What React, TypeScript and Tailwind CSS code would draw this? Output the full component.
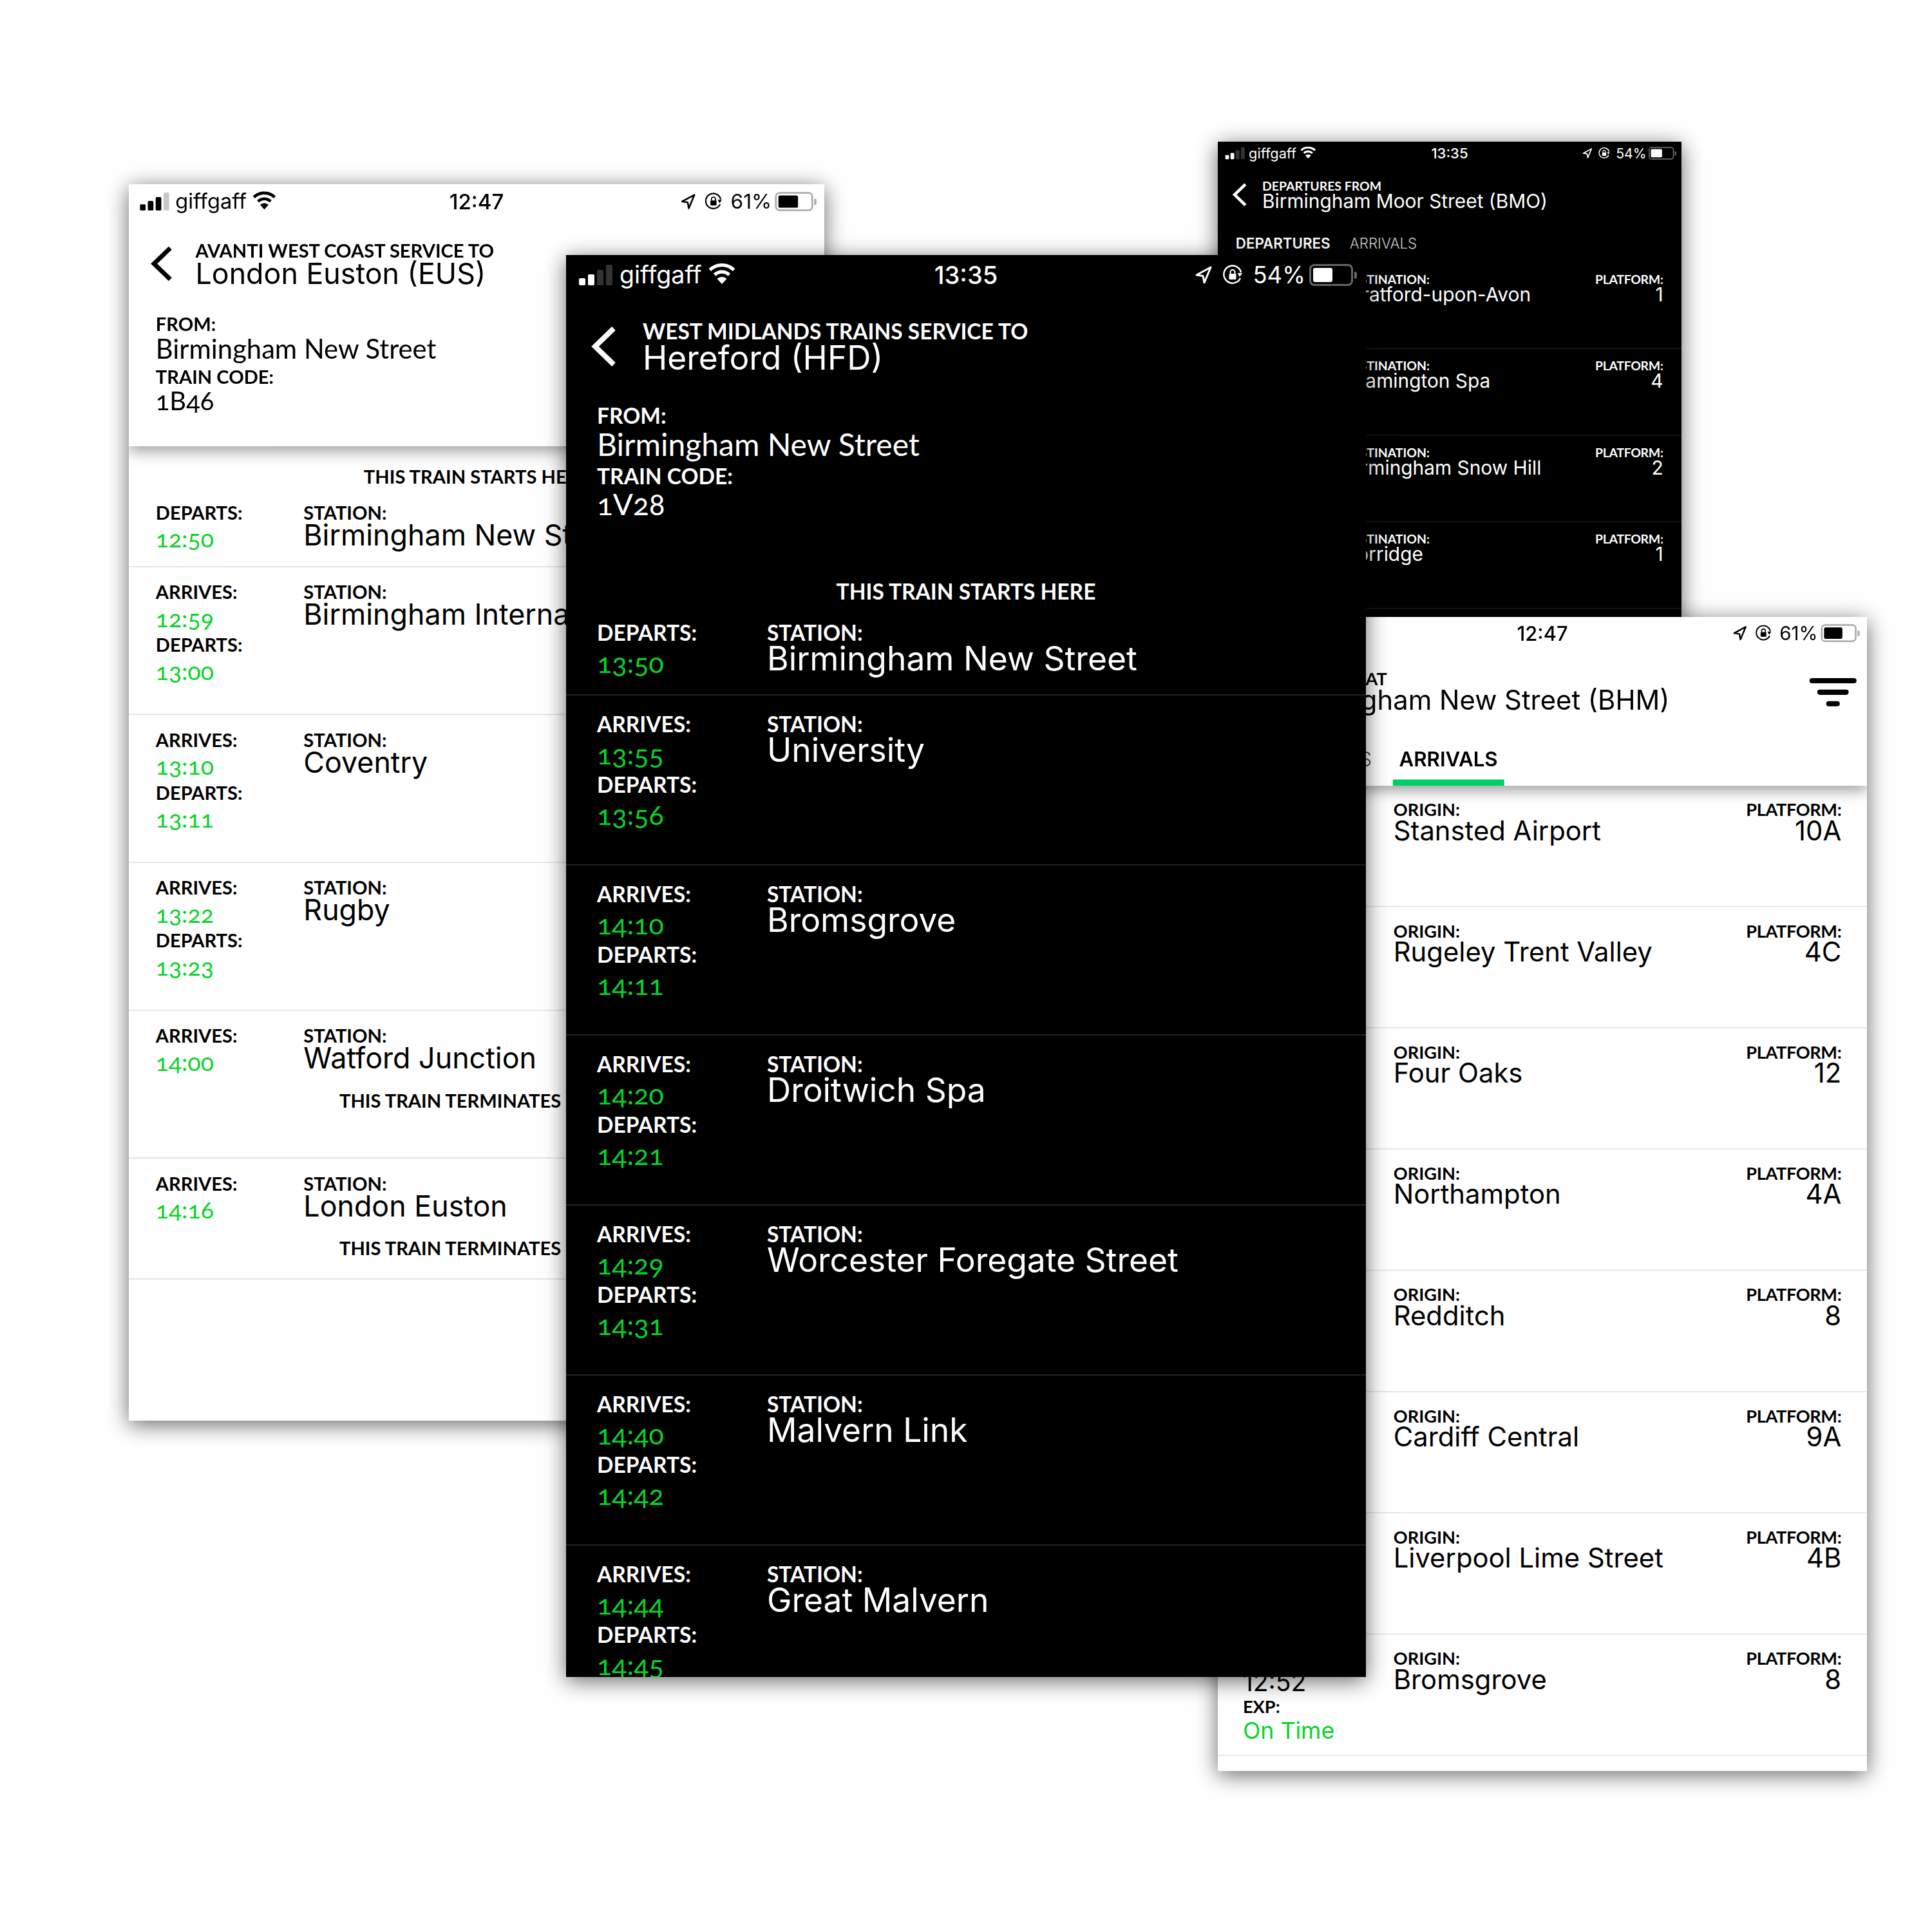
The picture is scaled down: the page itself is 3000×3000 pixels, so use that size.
import React from "react";

const inter = "[font-family:Inter,sans-serif]";
const labelBase = "[font-family:Lato,sans-serif] font-bold text-[33.500px] whitespace-nowrap";
const label = `${labelBase} leading-[34px]`;
const raleway = "[font-family:Lato,sans-serif] font-normal oldstyle-nums whitespace-nowrap";

function BackChevron() {
  return (
    <svg viewBox="0 0 40 62" className="w-[40px] h-[62px]" fill="none" stroke="currentColor" strokeWidth="8">
      <path d="M36 3 L7 31 L36 59" />
    </svg>
  );
}

function Wifi() {
  return (
    <svg viewBox="0 0 42 32" className="w-[42px] h-[32px]" fill="currentColor">
      <path d="M21 0C13 0 5.800 3.100 .6 8.300l3.600 3.900C8.500 7.900 14.400 5.300 21 5.300s12.500 2.600 16.800 6.900l3.600-3.900C36.200 3.100 29 0 21 0z" />
      <path d="M21 10.500c-5.100 0-9.700 2-13.100 5.300l3.600 3.900c2.400-2.400 5.800-3.900 9.500-3.900s7.100 1.500 9.500 3.900l3.600-3.900c-3.400-3.300-8-5.300-13.100-5.300z" />
      <path d="M21 21c-2.900 0-5.500 1.200-7.400 3L21 32l7.400-8c-1.900-1.800-4.500-3-7.400-3z" />
    </svg>
  );
}

function LocationArrow() {
  return (
    <svg viewBox="0 0 28 30" className="w-[28px] h-[30px]" fill="none" stroke="currentColor" strokeWidth="3" strokeLinejoin="round">
      <path d="M25 3 L3 15 L13 16.500 L15 27 Z" />
    </svg>
  );
}

function RotationLock() {
  return (
    <svg viewBox="0 0 32 32" className="w-[32px] h-[32px]" fill="none" stroke="currentColor" strokeWidth="2.500">
      <path d="M28 21 A13.500 13.500 0 1 1 29 12" />
      <path d="M31 13 L23.500 13 L27 19 Z" fill="currentColor" stroke="none" />
      <rect x="10.500" y="14" width="11" height="9" rx="1.500" fill="currentColor" stroke="none" />
      <path d="M12.500 14 V11.500 a3.500 3.500 0 0 1 7 0 V14" strokeWidth="2" />
    </svg>
  );
}

function StatusBar({ dark, carrier = "giffgaff", time, percent, bars, level }: { dark: boolean; carrier?: string; time: string; percent: string; bars: number; level: string }) {
  const on = dark ? "bg-white" : "bg-black";
  const off = dark ? "bg-[#333333]" : "bg-[#c8c8c8]";
  return (
    <div className={`grid grid-cols-3 items-center h-[60px] pt-[2px] pl-[20px] pr-[20px] text-[36.500px] ${inter} ${dark ? "text-white" : "text-black"}`}>
      <div className="flex items-center">
        <div className="flex items-end gap-[4px] h-[32px]">
          <div className={`w-[10px] h-[11px] rounded-[2px] ${on}`} />
          <div className={`w-[10px] h-[17px] rounded-[2px] ${on}`} />
          <div className={`w-[10px] h-[24px] rounded-[2px] ${bars > 2 ? on : off}`} />
          <div className={`w-[10px] h-[32px] rounded-[2px] ${bars > 3 ? on : off}`} />
        </div>
        <span className="ml-[11px] text-[37.500px]">{carrier}</span>
        <div className="ml-[10px] -mt-[4px]"><Wifi /></div>
      </div>
      <div className="text-center font-medium text-[38px]">{time}</div>
      <div className="flex items-center justify-end -mr-[6px]">
        <LocationArrow />
        <div className="ml-[15px]"><RotationLock /></div>
        <span className="ml-[15px]">{percent}</span>
        <div className={`ml-[6px] w-[68px] h-[34px] rounded-[8px] border-[3px] p-[3px] ${dark ? "border-[#666666]" : "border-[#a8a8a8]"}`}>
          <div className={`h-full rounded-[3px] ${level} ${on}`} />
        </div>
        <div className={`ml-[2px] w-[4px] h-[11px] rounded-r-[3px] ${dark ? "bg-[#666666]" : "bg-[#a8a8a8]"}`} />
      </div>
    </div>
  );
}

function Title({ over, name }: { over: string; name: string }) {
  return (
    <div className="flex items-start pt-[40px] pl-[38px]">
      <div className="mt-[11px] w-[81px] shrink-0"><BackChevron /></div>
      <div>
        <div className={`${labelBase} leading-[36px]`}>{over}</div>
        <div className={`${inter} text-[51.500px] leading-[47px] whitespace-nowrap`}>{name}</div>
      </div>
    </div>
  );
}

type Stop = { arrives?: string; departs?: string; station: string; ends?: boolean };

function Time({ value }: { value: string }) {
  return <div className={`${raleway} text-[#08d429] text-[43px] leading-[60px]`}>{value}</div>;
}

function StopRow({ stop, dark, height, first }: { stop: Stop; dark: boolean; height: string; first: boolean }) {
  return (
    <div className={`${height} ${first ? "pt-[29px]" : "pt-[27px]"} shrink-0 px-[48px] border-b-[2px] ${dark ? "border-[#222222]" : "border-[#e3e3e3]"}`}>
      <div className="flex">
        <div className="w-[264px] shrink-0">
          <div className={label}>{stop.arrives ? "ARRIVES:" : "DEPARTS:"}</div>
          <Time value={(stop.arrives ?? stop.departs) as string} />
          {stop.arrives && stop.departs && (
            <>
              <div className={label}>DEPARTS:</div>
              <Time value={stop.departs} />
            </>
          )}
        </div>
        <div>
          <div className={label}>STATION:</div>
          <div className={`${inter} text-[51.500px] leading-[46px] whitespace-nowrap`}>{stop.station}</div>
        </div>
      </div>
      {stop.ends && <div className={`${label} mt-[22px] text-center`}>THIS TRAIN TERMINATES HERE</div>}
    </div>
  );
}

function ServiceScreen({ dark, status, operator, to, code, stops, lastHeight }: { dark: boolean; status: React.ReactNode; operator: string; to: string; code: string; stops: Stop[]; lastHeight: string }) {
  return (
    <div className={`flex flex-col h-full ${dark ? "bg-black text-white" : "bg-white text-black"}`}>
      <div className={`relative z-10 h-[468px] shrink-0 ${dark ? "bg-black" : "bg-white shadow-[0_8px_26px_rgba(0,0,0,0.4)]"}`}>
        {status}
        <Title over={`${operator} SERVICE TO`} name={to} />
        <div className="pt-[49px] px-[48px]">
          <div className={label}>FROM:</div>
          <div className={`${raleway} text-[48px] leading-[56px] mb-[4px]`}>Birmingham New Street</div>
          <div className={label}>TRAIN CODE:</div>
          <div className={`${raleway} text-[46px] leading-[54px]`}>{code}</div>
        </div>
      </div>
      <div className={`${label} pt-[37px] h-[72px] shrink-0 text-center`}>THIS TRAIN STARTS HERE</div>
      {stops.map((stop, i) => (
        <StopRow key={stop.station} stop={stop} dark={dark} first={i === 0} height={i === 0 ? "h-[144px]" : i === stops.length - 1 ? lastHeight : "h-[264px]"} />
      ))}
    </div>
  );
}

type Board = { place: string; platform: string; time?: string };

function BoardScreen({ dark, status, over, name, active, column, rows }: { dark: boolean; status: React.ReactNode; over: string; name: string; active: "DEPARTURES" | "ARRIVALS"; column: string; rows: Board[] }) {
  const on = `${dark ? "text-white" : "text-black"} font-semibold`;
  const off = `${dark ? "text-[#cccccc]" : "text-[#444444]"} font-light`;
  return (
    <div className={`flex flex-col h-full ${dark ? "bg-black text-white" : "bg-white text-black"}`}>
      <div className={`relative z-10 flex flex-col h-[323px] shrink-0 ${dark ? "bg-black" : "bg-white shadow-[0_8px_26px_rgba(0,0,0,0.4)]"}`}>
        {status}
        <div className="relative">
          <Title over={over} name={name} />
          {!dark && (
            <div className="absolute right-[20px] top-[57px] w-[90px] flex flex-col items-center gap-[12px]">
              <div className="w-[90px] h-[10px] rounded-full bg-black" />
              <div className="w-[60px] h-[10px] rounded-full bg-black" />
              <div className="w-[26px] h-[10px] rounded-full bg-black" />
            </div>
          )}
        </div>
        <div className={`flex pl-[36px] mt-auto ${inter} text-[38.500px]`}>
          {(["DEPARTURES", "ARRIVALS"] as const).map((tab) => (
            <div key={tab} className={`px-[12px] mr-[28px] h-[72px] border-b-[12px] leading-[42px] whitespace-nowrap ${tab === active ? `${on} border-[#00ce67]` : `${off} border-transparent`}`}>
              {tab}
            </div>
          ))}
        </div>
      </div>
      {rows.map((row) => (
        <div key={row.place} className={`flex h-[232px] shrink-0 pt-[28px] pl-[48px] pr-[49px] border-b-[2px] ${dark ? "border-[#222222]" : "border-[#e3e3e3]"}`}>
          <div className="w-[288px] shrink-0">
            {row.time && (
              <>
                <div className={label}>SCH:</div>
                <div className={`${inter} text-[48px] leading-[58px]`}>{row.time}</div>
                <div className={label}>EXP:</div>
                <div className={`${inter} text-[#08d429] text-[44px] leading-[60px] whitespace-nowrap`}>On Time</div>
              </>
            )}
          </div>
          <div className="flex-1">
            <div className={label}>{column}</div>
            <div className={`${inter} text-[51.500px] leading-[46px] whitespace-nowrap`}>{row.place}</div>
          </div>
          <div className="text-right">
            <div className={`${label} tracking-[-0.5px]`}>PLATFORM:</div>
            <div className={`${inter} text-[51.500px] leading-[46px]`}>{row.platform}</div>
          </div>
        </div>
      ))}
    </div>
  );
}

function Phone({ place, scale, children }: { place: string; scale: string; children: React.ReactNode }) {
  return (
    <div className={`absolute ${place} shadow-[0_6px_32px_rgba(0,0,0,0.6)]`}>
      <div className="w-full h-full overflow-hidden">
        <div className={`w-[1242px] h-[2208px] origin-top-left ${scale}`}>{children}</div>
      </div>
    </div>
  );
}

const avantiStops: Stop[] = [
  { departs: "12:50", station: "Birmingham New Street" },
  { arrives: "12:59", departs: "13:00", station: "Birmingham International" },
  { arrives: "13:10", departs: "13:11", station: "Coventry" },
  { arrives: "13:22", departs: "13:23", station: "Rugby" },
  { arrives: "14:00", station: "Watford Junction", ends: true },
  { arrives: "14:16", station: "London Euston", ends: true },
];

const herefordStops: Stop[] = [
  { departs: "13:50", station: "Birmingham New Street" },
  { arrives: "13:55", departs: "13:56", station: "University" },
  { arrives: "14:10", departs: "14:11", station: "Bromsgrove" },
  { arrives: "14:20", departs: "14:21", station: "Droitwich Spa" },
  { arrives: "14:29", departs: "14:31", station: "Worcester Foregate Street" },
  { arrives: "14:40", departs: "14:42", station: "Malvern Link" },
  { arrives: "14:44", departs: "14:45", station: "Great Malvern" },
];

const moorStreet: Board[] = [
  { place: "Stratford-upon-Avon", platform: "1" },
  { place: "Leamington Spa", platform: "4" },
  { place: "Birmingham Snow Hill", platform: "2" },
  { place: "Dorridge", platform: "1" },
];

const newStreet: Board[] = [
  { place: "Stansted Airport", platform: "10A" },
  { place: "Rugeley Trent Valley", platform: "4C" },
  { place: "Four Oaks", platform: "12" },
  { place: "Northampton", platform: "4A" },
  { place: "Redditch", platform: "8" },
  { place: "Cardiff Central", platform: "9A" },
  { place: "Liverpool Lime Street", platform: "4B" },
  { place: "Bromsgrove", platform: "8", time: "12:52" },
];

export default function App() {
  return (
    <div className="relative w-[3000px] h-[3000px] bg-white overflow-hidden">
      <Phone place="left-[200px] top-[286px] w-[1080px] h-[1920px]" scale="scale-[0.86957]">
        <ServiceScreen
          dark={false}
          status={<StatusBar dark={false} time="12:47" percent="61%" bars={3} level="w-[63%]" />}
          operator="AVANTI WEST COAST"
          to="London Euston (EUS)"
          code="1B46"
          stops={avantiStops}
          lastHeight="h-[216px]"
        />
      </Phone>
      <Phone place="left-[1891px] top-[220px] w-[720px] h-[1280px]" scale="scale-[0.57971]">
        <BoardScreen
          dark
          status={<StatusBar dark time="13:35" percent="54%" bars={2} level="w-[54%]" />}
          over="DEPARTURES FROM"
          name="Birmingham Moor Street (BMO)"
          active="DEPARTURES"
          column="DESTINATION:"
          rows={moorStreet}
        />
      </Phone>
      <Phone place="left-[1891px] top-[958px] w-[1008px] h-[1792px]" scale="scale-[0.81159]">
        <BoardScreen
          dark={false}
          status={<StatusBar dark={false} time="12:47" percent="61%" bars={3} level="w-[63%]" />}
          over="ARRIVALS AT"
          name="Birmingham New Street (BHM)"
          active="ARRIVALS"
          column="ORIGIN:"
          rows={newStreet}
        />
      </Phone>
      <Phone place="left-[879px] top-[396px] w-[1242px] h-[2208px]" scale="scale-100">
        <ServiceScreen
          dark
          status={<StatusBar dark time="13:35" percent="54%" bars={2} level="w-[54%]" />}
          operator="WEST MIDLANDS TRAINS"
          to="Hereford (HFD)"
          code="1V28"
          stops={herefordStops}
          lastHeight="h-[264px]"
        />
      </Phone>
    </div>
  );
}
